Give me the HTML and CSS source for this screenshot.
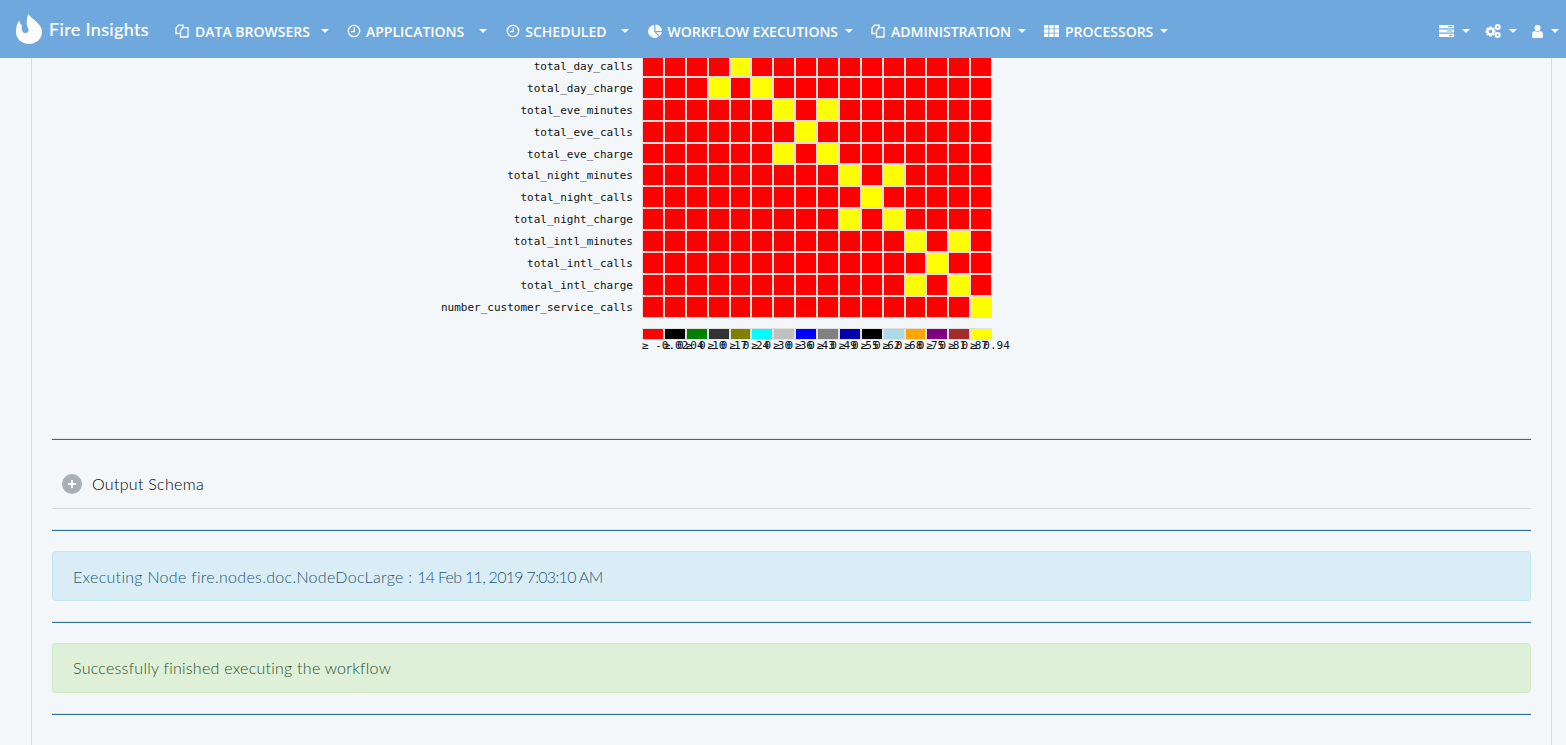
FILE: index.html
```html
<!DOCTYPE html>
<html lang="en">
<head>
	<meta charset="utf-8">
	<title>Fire Insights</title>
	<link rel="stylesheet" href="styles.css">
</head>
<body>
	<header class="navbar">
		<a class="brand">
			<svg class="brand-logo" viewBox="0 0 26 30"><path d="M12.300 0C15 5 26 9 26 18C26 25 20 30 13 30C6 30 0 25 0 18C0 13 1 9.500 3.300 6.500C3.800 9 4.500 10.500 5.800 11C5.300 15 6 18.800 9 19C12.500 19 13.500 16.500 12 14C10 10.500 10.500 5 12.300 0Z"/></svg>
			<span>Fire Insights</span>
		</a>
		<nav class="menu">
			<a class="menu-item cr-11">
				<svg class="ico" viewBox="0 0 14 14"><path d="M4.500 9.500H1V4L3.500 1.200H8V4M5.500 13V6.500L8 3.700H13V13z"/></svg>
				DATA BROWSERS <i class="caret"></i></a>
			<a class="menu-item cr-14">
				<svg class="ico clock" viewBox="0 0 14 14"><circle cx="7" cy="7" r="5.700"/><path d="M7.300 3.500v4.200H4"/></svg>
				APPLICATIONS <i class="caret"></i></a>
			<a class="menu-item cr-13">
				<svg class="ico clock" viewBox="0 0 14 14"><circle cx="7" cy="7" r="5.700"/><path d="M7.300 3.500v4.200H4"/></svg>
				SCHEDULED <i class="caret"></i></a>
			<a class="menu-item">
				<svg class="ico solid" viewBox="0 0 14 14"><path d="M6.200 1v6.800l4.500 4.700A6.500 6.500 0 1 1 6.200 1zM7.500 0.500A6.500 6.500 0 0 1 14 7H7.500zM8 8.200h6A6.500 6.500 0 0 1 11.800 12z"/></svg>
				WORKFLOW EXECUTIONS <i class="caret"></i></a>
			<a class="menu-item">
				<svg class="ico" viewBox="0 0 14 14"><path d="M4.500 9.500H1V4L3.500 1.200H8V4M5.500 13V6.500L8 3.700H13V13z"/></svg>
				ADMINISTRATION <i class="caret"></i></a>
			<a class="menu-item">
				<svg class="ico solid grid-ico" viewBox="0 0 15 12"><path d="M0 0h4.400v3.400H0zM5.300 0h4.400v3.400H5.300zM10.600 0H15v3.400h-4.400zM0 4.300h4.400v3.400H0zM5.300 4.300h4.400v3.400H5.300zM10.600 4.300H15v3.400h-4.400zM0 8.600h4.400V12H0zM5.300 8.600h4.400V12H5.300zM10.600 8.600H15V12h-4.400z"/></svg>
				PROCESSORS <i class="caret"></i></a>
		</nav>
		<div class="menu-right">
			<a class="icon-item">
				<svg class="ico solid tasks-ico" viewBox="0 0 15 12"><path fill-rule="evenodd" d="M0 0h15v3.200H0zM9 1v1h4.500V1zM0 4.400h15v3.200H0zM8 5.500v1h5.500v-1zM0 8.800h15V12H0zM10 9.900v1h3.500v-1z"/></svg>
				<i class="caret"></i></a>
			<a class="icon-item">
				<svg class="ico solid cogs-ico" viewBox="0 0 16 14"><path fill-rule="evenodd" d="M4.300 2.500h2.400l.3 1.400 1.300-.6 1.500 1.500-.7 1.200 1.400.4v2.200l-1.400.4.700 1.200-1.500 1.500-1.300-.6-.3 1.400H4.300l-.3-1.400-1.300.6-1.500-1.500.7-1.200L.5 8.600V6.400l1.400-.4-.7-1.200 1.500-1.500 1.300.6zM5.500 5.700a1.800 1.800 0 1 0 0 3.600a1.800 1.800 0 1 0 0-3.600zM12.700 0a3 3 0 1 1 0 6a3 3 0 1 1 0-6zM12.700 2a1 1 0 1 0 0 2a1 1 0 1 0 0-2zM12.700 8a3 3 0 1 1 0 6a3 3 0 1 1 0-6zM12.700 10a1 1 0 1 0 0 2a1 1 0 1 0 0-2z"/></svg>
				<i class="caret"></i></a>
			<a class="icon-item">
				<svg class="ico solid user-ico" viewBox="0 0 11 13"><path d="M5.500 0a3 3 0 0 1 3 3.200c0 1.500-.8 3-3 3s-3-1.500-3-3A3 3 0 0 1 5.500 0zM2.500 6c1 1 5 1 6 0c1.500.3 2.500 1.500 2.500 4v1.500c0 1-1 1.500-2 1.500H2c-1 0-2-.5-2-1.500V10c0-2.500 1-3.700 2.500-4z"/></svg>
				<i class="caret"></i></a>
		</div>
	</header>

	<main class="page">
		<section class="chart">
			<div class="chart-body">
				<div class="row-labels">
					<div class="row-label">total_day_calls</div>
					<div class="row-label">total_day_charge</div>
					<div class="row-label">total_eve_minutes</div>
					<div class="row-label">total_eve_calls</div>
					<div class="row-label">total_eve_charge</div>
					<div class="row-label">total_night_minutes</div>
					<div class="row-label">total_night_calls</div>
					<div class="row-label">total_night_charge</div>
					<div class="row-label">total_intl_minutes</div>
					<div class="row-label">total_intl_calls</div>
					<div class="row-label">total_intl_charge</div>
					<div class="row-label">number_customer_service_calls</div>
				</div>
				<div class="cells">
					<i></i><i></i><i></i><i></i><i class="hot"></i><i></i><i></i><i></i><i></i><i></i><i></i><i></i><i></i><i></i><i></i><i></i>
					<i></i><i></i><i></i><i class="hot"></i><i></i><i class="hot"></i><i></i><i></i><i></i><i></i><i></i><i></i><i></i><i></i><i></i><i></i>
					<i></i><i></i><i></i><i></i><i></i><i></i><i class="hot"></i><i></i><i class="hot"></i><i></i><i></i><i></i><i></i><i></i><i></i><i></i>
					<i></i><i></i><i></i><i></i><i></i><i></i><i></i><i class="hot"></i><i></i><i></i><i></i><i></i><i></i><i></i><i></i><i></i>
					<i></i><i></i><i></i><i></i><i></i><i></i><i class="hot"></i><i></i><i class="hot"></i><i></i><i></i><i></i><i></i><i></i><i></i><i></i>
					<i></i><i></i><i></i><i></i><i></i><i></i><i></i><i></i><i></i><i class="hot"></i><i></i><i class="hot"></i><i></i><i></i><i></i><i></i>
					<i></i><i></i><i></i><i></i><i></i><i></i><i></i><i></i><i></i><i></i><i class="hot"></i><i></i><i></i><i></i><i></i><i></i>
					<i></i><i></i><i></i><i></i><i></i><i></i><i></i><i></i><i></i><i class="hot"></i><i></i><i class="hot"></i><i></i><i></i><i></i><i></i>
					<i></i><i></i><i></i><i></i><i></i><i></i><i></i><i></i><i></i><i></i><i></i><i></i><i class="hot"></i><i></i><i class="hot"></i><i></i>
					<i></i><i></i><i></i><i></i><i></i><i></i><i></i><i></i><i></i><i></i><i></i><i></i><i></i><i class="hot"></i><i></i><i></i>
					<i></i><i></i><i></i><i></i><i></i><i></i><i></i><i></i><i></i><i></i><i></i><i></i><i class="hot"></i><i></i><i class="hot"></i><i></i>
					<i></i><i></i><i></i><i></i><i></i><i></i><i></i><i></i><i></i><i></i><i></i><i></i><i></i><i></i><i></i><i class="hot"></i>
				</div>
			</div>
			<div class="legend">
				<div class="key"><b class="k-red"></b>≥ -0.02</div>
				<div class="key"><b class="k-black"></b>≥ 0.04</div>
				<div class="key"><b class="k-green"></b>≥ 0.10</div>
				<div class="key"><b class="k-dark"></b>≥ 0.17</div>
				<div class="key"><b class="k-olive"></b>≥ 0.24</div>
				<div class="key"><b class="k-cyan"></b>≥ 0.30</div>
				<div class="key"><b class="k-silver"></b>≥ 0.36</div>
				<div class="key"><b class="k-blue"></b>≥ 0.43</div>
				<div class="key"><b class="k-gray"></b>≥ 0.49</div>
				<div class="key"><b class="k-navy"></b>≥ 0.55</div>
				<div class="key"><b class="k-black"></b>≥ 0.62</div>
				<div class="key"><b class="k-light"></b>≥ 0.68</div>
				<div class="key"><b class="k-orange"></b>≥ 0.75</div>
				<div class="key"><b class="k-purple"></b>≥ 0.81</div>
				<div class="key"><b class="k-brown"></b>≥ 0.87</div>
				<div class="key"><b class="k-yellow"></b>≥ 0.94</div>
			</div>
		</section>

		<hr class="rule">
		<div class="schema">
			<span class="plus"><svg viewBox="0 0 10 10"><path d="M5 1v8M1 5h8"/></svg></span>
			<span>Output Schema</span>
		</div>
		<hr class="rule">
		<div class="alert info">Executing Node fire.nodes.doc.NodeDocLarge : <span class="date">14 Feb 11, 2019 7:03:10 AM</span></div>
		<hr class="rule">
		<div class="alert success">Successfully finished executing the workflow</div>
		<hr class="rule">
	</main>
</body>
</html>
```

FILE: styles.css
```css
body {
	margin: 0;
	height: 745px;
	overflow: hidden;
	background: #f3f7fa;
	color: #333;
	font-family: Lato, "Open Sans", sans-serif;
}
a {
	color: #fff;
	text-decoration: none;
}

.navbar {
	position: fixed;
	top: 0;
	left: 0;
	right: 0;
	z-index: 10;
	height: 58px;
	display: flex;
	align-items: center;
	background: #6fa8dc;
	color: #fff;
}
.brand {
	display: flex;
	align-items: center;
	gap: 7px;
	width: 159px;
	padding-left: 16px;
	box-sizing: border-box;
	font-size: 18px;
	letter-spacing: .35px;
	-webkit-text-stroke: .2px #fff;
}
.brand span {
	margin-top: -1px;
}
.brand-logo {
	width: 26px;
	height: 30px;
	fill: #fff;
}
.menu {
	display: flex;
	align-items: center;
	margin-left: 16px;
	font-family: "Open Sans", sans-serif;
	font-size: 14px;
	font-weight: 600;
	white-space: nowrap;
}
.menu-item {
	display: flex;
	align-items: center;
	margin-right: 18px;
	margin-top: 4px;
}
.ico {
	width: 14px;
	height: 14px;
	margin-right: 6px;
	flex: none;
	fill: none;
	stroke: #fff;
	stroke-width: 1.3;
}
.ico.clock {
	margin-right: 5px;
}
.ico.solid {
	fill: #fff;
	stroke: none;
}
.grid-ico,
.tasks-ico {
	width: 15px;
	height: 12px;
}
.cogs-ico {
	width: 16px;
	height: 14px;
}
.user-ico {
	width: 11px;
	height: 13px;
}
.caret {
	display: inline-block;
	width: 0;
	height: 0;
	margin-left: 7px;
	border-top: 4px solid #fff;
	border-left: 4px solid transparent;
	border-right: 4px solid transparent;
}
.cr-11 .caret {
	margin-left: 11px;
}
.cr-13,
.cr-14 {
	margin-right: 19px;
}
.cr-13 .caret {
	margin-left: 14px;
}
.cr-14 .caret {
	margin-left: 15px;
}
.menu-right {
	display: flex;
	align-items: center;
	gap: 15px;
	margin-left: auto;
	margin-right: 7px;
	margin-top: 4px;
}
.icon-item {
	display: flex;
	align-items: center;
}
.icon-item .caret {
	margin-left: 2px;
}

.page {
	box-sizing: border-box;
	width: 1521px;
	height: 745px;
	margin-left: 31px;
	padding: 55px 20px 0 20px;
	border-left: 1px solid #d6dadd;
	border-right: 1px solid #d6dadd;
}
.chart {
	height: 363px;
	font-family: "DejaVu Sans Mono", monospace;
	font-size: 11px;
	color: #111;
}
.chart-body {
	display: flex;
}
.row-labels {
	width: 581px;
	margin-right: 9px;
	text-align: right;
}
.row-label {
	height: 21.900px;
	line-height: 23.900px;
	white-space: nowrap;
}
.cells {
	display: grid;
	grid-template-columns: repeat(16, 21.875px);
	grid-auto-rows: 21.900px;
	background: #dedede;
}
.cells i {
	box-sizing: border-box;
	border: 1px solid #dedede;
	background: red;
}
.cells i.hot {
	background: #ff0;
}
.legend {
	display: grid;
	grid-template-columns: repeat(16, 21.875px);
	margin-left: 590px;
	margin-top: 10px;
}
.key {
	white-space: nowrap;
	line-height: 12px;
}
.key b {
	display: block;
	height: 12px;
	box-sizing: border-box;
	border: 1px solid #e0e0e0;
}
.k-red { background: red; }
.k-black { background: #000; }
.k-green { background: green; }
.k-dark { background: #333; }
.k-olive { background: olive; }
.k-cyan { background: cyan; }
.k-silver { background: silver; }
.k-blue { background: blue; }
.k-gray { background: gray; }
.k-navy { background: #00a; }
.k-light { background: lightblue; }
.k-orange { background: orange; }
.k-purple { background: purple; }
.k-brown { background: brown; }
.k-yellow { background: #ff0; }

.rule {
	height: 1px;
	margin: 21px 0 20px;
	border: 0;
	background: #2d6f96;
	box-shadow: 0 -1px 0 #dfe3e6;
}
.schema {
	display: flex;
	align-items: center;
	gap: 10px;
	height: 48px;
	padding-left: 10px;
	border-bottom: 1px solid #d6d9dc;
	font-size: 16px;
	font-weight: 300;
	letter-spacing: .3px;
	color: #000;
}
.schema span:last-child {
	margin-top: -2px;
}
.plus {
	width: 20px;
	height: 20px;
	display: flex;
	align-items: center;
	justify-content: center;
	border-radius: 50%;
	background: #a9b0b5;
}
.plus svg {
	width: 10px;
	height: 10px;
	stroke: #fff;
	stroke-width: 2;
}
.alert {
	box-sizing: border-box;
	height: 50px;
	padding: 0 20px;
	line-height: 50px;
	border: 1px solid;
	border-radius: 4px;
	font-size: 16px;
	font-weight: 300;
	letter-spacing: .3px;
}
.date {
	letter-spacing: -.7px;
}
.info {
	background: #d9edf7;
	border-color: #bce8f1;
	color: #27566f;
}
.success {
	background: #dff0d8;
	border-color: #d0e9c6;
	color: #2c4f2e;
	line-height: 48px;
	letter-spacing: .25px;
}
```
